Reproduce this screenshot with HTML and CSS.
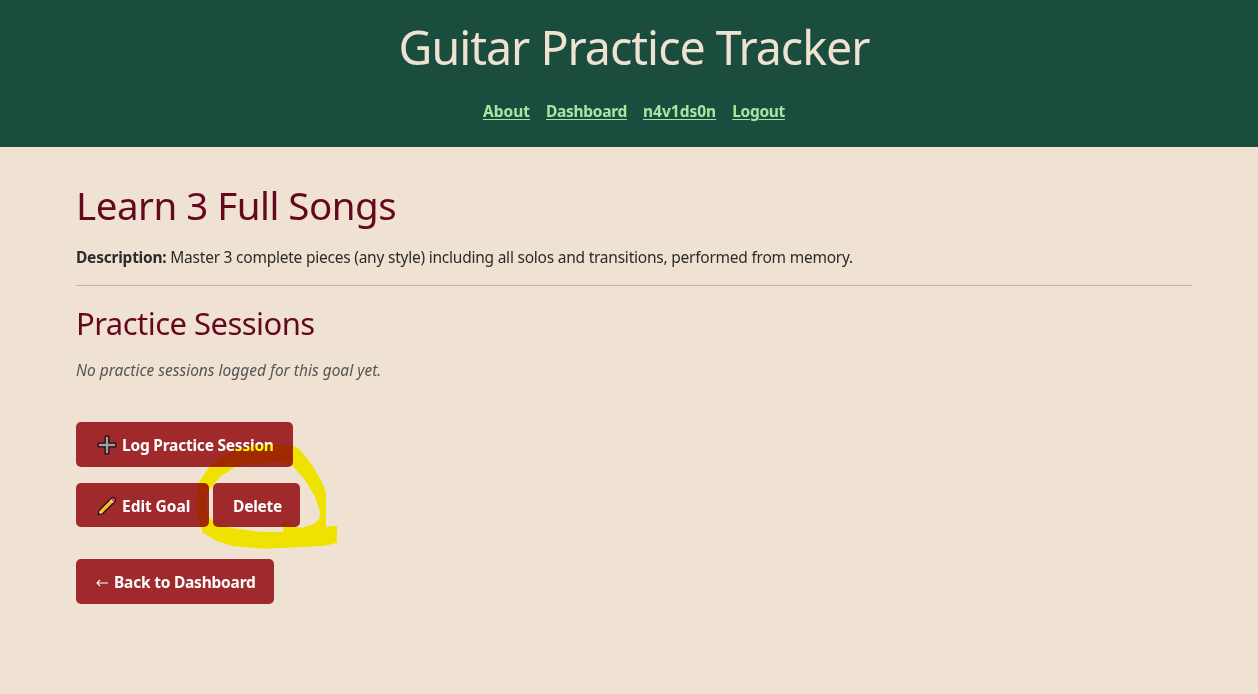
FILE: index.html
```html
<!DOCTYPE html>
<html lang="en">
<head>
<meta charset="utf-8">
<title>Guitar Practice Tracker</title>
<link rel="stylesheet" href="styles.css">
</head>
<body>
<header class="site-header">
  <h1 class="site-title">Guitar Practice Tracker</h1>
  <nav class="site-nav">
    <a class="nav-about" href="#">About</a>
    <a class="nav-dashboard" href="#">Dashboard</a>
    <a class="nav-user" href="#">n4v1ds0n</a>
    <a class="nav-logout" href="#">Logout</a>
  </nav>
</header>
<main class="goal">
  <h2 class="goal-title">Learn 3 Full Songs</h2>
  <p class="description"><strong>Description:</strong> <span>Master 3 complete pieces (any style) including all solos and transitions, performed from memory.</span></p>
  <hr class="divider">
  <h3 class="section-title">Practice Sessions</h3>
  <p class="empty">No practice sessions logged for this goal yet.</p>
  <div class="actions">
    <a class="btn btn-log" href="#"><svg class="icon" viewBox="0 0 20 20"><path d="M8.200 1.200h3.600v7h7v3.600h-7v7H8.200v-7h-7V8.200h7z" fill="#a3a0a5" stroke="#171117" stroke-width="1.300" stroke-linejoin="round"/></svg><span>Log Practice Session</span></a>
    <div class="row">
      <a class="btn btn-edit" href="#"><svg class="icon" viewBox="0 0 20 20"><path d="M1.200 18.600l1.300-4.600L14.500 2q1.500-1.200 3.100.3t.4 3.200L6 17.300z" fill="#fdb81e" stroke="#171117" stroke-width="1.300" stroke-linejoin="round"/><path d="M2.900 14.300l2.700 2.600-3.500 1z" fill="#f1d2ad"/><path d="M12.800 4.500l2.800 2.800 1.200-1.200L14 3.300z" fill="#d3d3d8"/><path d="M14 3.300l2.800 2.800.8-.8q.7-1.300-.4-2.400t-2.400-.4z" fill="#e8354b"/><path d="M1.200 18.800l.6-2 1.400 1.400z" fill="#171117"/></svg><span>Edit Goal</span></a>
      <button class="btn btn-delete" type="button"><span>Delete</span></button>
    </div>
    <a class="btn btn-back" href="#"><svg class="arrow" viewBox="0 0 14 12"><path d="M13 6H2M5 3L2 6l3 3" fill="none" stroke="#fff" stroke-width="1.100"/></svg><span>Back to Dashboard</span></a>
  </div>
</main>
<svg class="marker" viewBox="0 0 144 108"><path fill-rule="evenodd" d="M.7 53.700 2.300 40.300 12.300 25.300 25.700 13.700 39 6.300 60.700 2.300 80.700 1.300 99 3 105.700 8.700 117.300 23.700 127.300 42 130 50.300V84.300L135 83H141V99.700L129 102.700 90.700 104.700 69 105.700 37.300 103.300 20.700 98 6.700 89.700 4.700 83.700.7 67ZM9 58.700 13.300 47 24 33.700 39 24.300 55.700 20.300 87.300 19.300 96.700 23 109 37 119 53.700 124 68.700 123.300 76.300 117.300 81.300 105.700 84.700 93.300 82.700V79.300H87.300V89L64 88.700 37.300 85.300 20.700 81 14 75.300 9.700 65.300Z"/></svg>
</body>
</html>
```
FILE: styles.css
```css
* { box-sizing: border-box; }
body {
  margin: 0;
  min-height: 694px;
  background: #f0e2d2;
  color: #2b2b2b;
  font: 15.5px/24px "Noto Sans", sans-serif;
}
h1, h2, h3, p { margin: 0; font-weight: 400; white-space: nowrap; }
.site-header {
  height: 147px;
  padding: 18px 0 0 10px;
  background: #1b4d3e;
  display: flex;
  flex-direction: column;
  align-items: center;
}
.site-title { font-size: 46.5px; line-height: 58px; letter-spacing: -0.98px; color: #f0e2d2; }
.site-nav { display: flex; gap: 16px; margin-top: 23px; }
.site-nav a { color: #a8e6a3; font-weight: 700; text-underline-offset: 2px; }
.nav-dashboard, .nav-logout { letter-spacing: -0.3px; }
.goal { padding: 34px 66px 0 76px; }
.goal-title { font-size: 38.5px; line-height: 48px; letter-spacing: -0.5px; color: #660720; }
.description { margin-top: 16px; height: 24px; letter-spacing: -0.23px; }
.divider { margin: 16px 0 0; border: 0; border-top: 1px solid #bfb3a5; }
.section-title { margin-top: 17px; font-size: 31px; line-height: 40px; letter-spacing: -0.54px; color: #660720; }
.empty { margin-top: 15px; font-style: italic; color: #555; }
.actions { margin-top: 40px; display: flex; flex-direction: column; align-items: flex-start; }
.row { display: flex; gap: 4px; margin: 16px 0 32px; }
.btn {
  display: flex;
  align-items: center;
  height: 45px;
  padding: 0 0 0 20px;
  border: 0;
  border-radius: 5px;
  background: #a0292b;
  color: #fff;
  font: 700 15.5px/24px "Noto Sans", sans-serif;
  letter-spacing: -0.22px;
  text-decoration: none;
  white-space: nowrap;
}
.row .btn { height: 44px; padding-top: 2px; }
.btn-log { width: 217px; }
.btn-edit { width: 133px; letter-spacing: -0.05px; }
.btn-delete { width: 87px; }
.btn-back { width: 198px; }
.icon { width: 20px; height: 20px; margin: 0 5px 0 1px; }
.arrow { width: 14px; height: 12px; margin: 2px 5px 0 -1px; }
/* Highlighter ring laid over the buttons */
.marker {
  position: absolute;
  left: 196px;
  top: 443px;
  width: 144px;
  height: 108px;
  fill: #ff0;
  mix-blend-mode: multiply;
  pointer-events: none;
}
```
